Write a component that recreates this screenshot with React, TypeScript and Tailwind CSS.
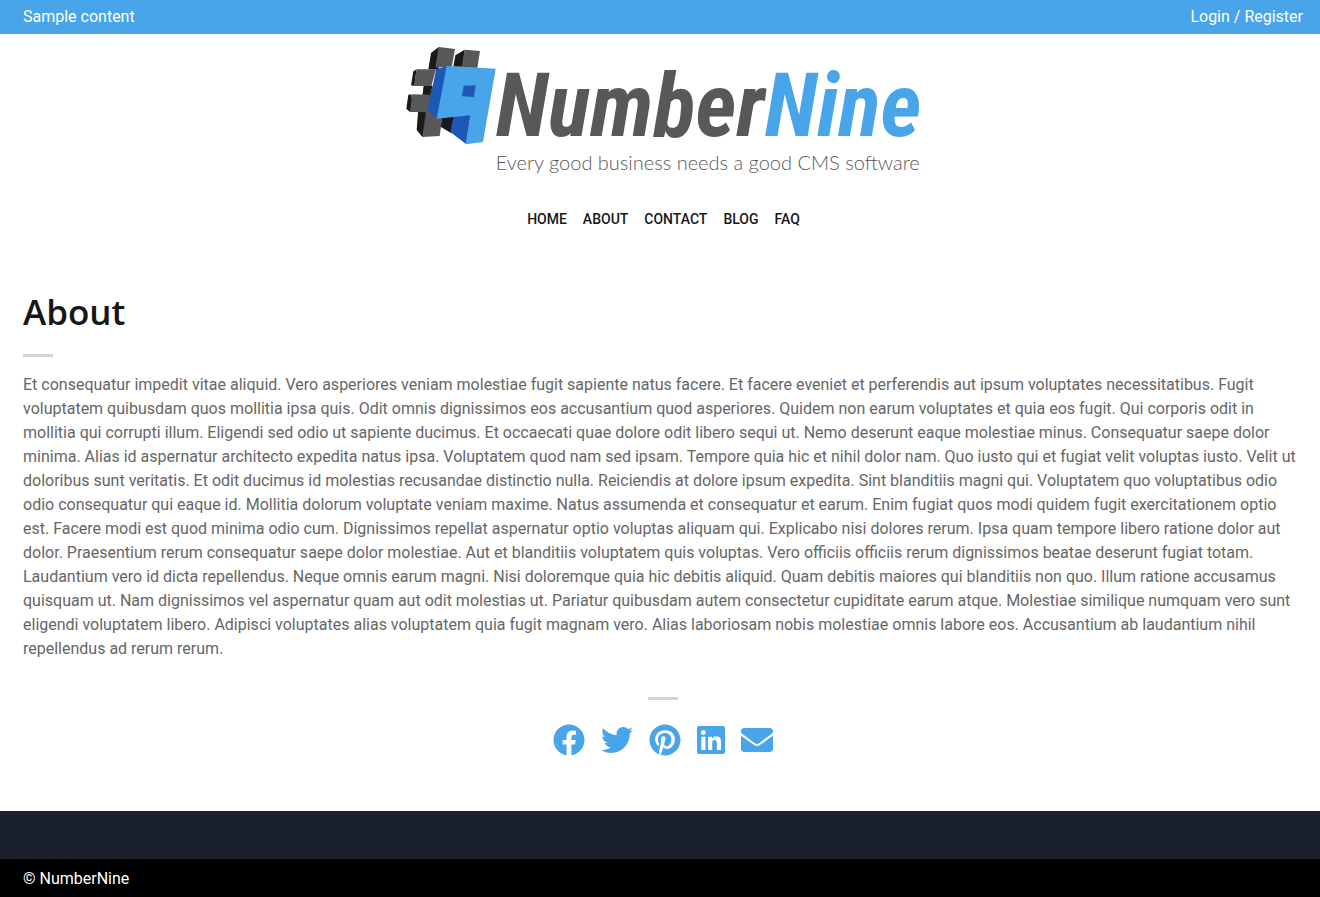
import React from "react";
import {
  FaFacebook,
  FaTwitter,
  FaPinterest,
  FaLinkedin,
  FaEnvelope,
} from "react-icons/fa";

const menu = ["Home", "About", "Contact", "Blog", "FAQ"];

const networks = [
  { label: "Facebook", Icon: FaFacebook, size: "h-8 w-8" },
  { label: "Twitter", Icon: FaTwitter, size: "h-8 w-8" },
  { label: "Pinterest", Icon: FaPinterest, size: "h-8 w-8" },
  { label: "LinkedIn", Icon: FaLinkedin, size: "h-8 w-7" },
  { label: "Email", Icon: FaEnvelope, size: "h-8 w-8" },
];

const aboutText =
  "Et consequatur impedit vitae aliquid. Vero asperiores veniam molestiae fugit sapiente natus facere. Et facere eveniet et perferendis aut ipsum voluptates necessitatibus. Fugit voluptatem quibusdam quos mollitia ipsa quis. Odit omnis dignissimos eos accusantium quod asperiores. Quidem non earum voluptates et quia eos fugit. Qui corporis odit in mollitia qui corrupti illum. Eligendi sed odio ut sapiente ducimus. Et occaecati quae dolore odit libero sequi ut. Nemo deserunt eaque molestiae minus. Consequatur saepe dolor minima. Alias id aspernatur architecto expedita natus ipsa. Voluptatem quod nam sed ipsam. Tempore quia hic et nihil dolor nam. Quo iusto qui et fugiat velit voluptas iusto. Velit ut doloribus sunt veritatis. Et odit ducimus id molestias recusandae distinctio nulla. Reiciendis at dolore ipsum expedita. Sint blanditiis magni qui. Voluptatem quo voluptatibus odio odio consequatur qui eaque id. Mollitia dolorum voluptate veniam maxime. Natus assumenda et consequatur et earum. Enim fugiat quos modi quidem fugit exercitationem optio est. Facere modi est quod minima odio cum. Dignissimos repellat aspernatur optio voluptas aliquam qui. Explicabo nisi dolores rerum. Ipsa quam tempore libero ratione dolor aut dolor. Praesentium rerum consequatur saepe dolor molestiae. Aut et blanditiis voluptatem quis voluptas. Vero officiis officiis rerum dignissimos beatae deserunt fugiat totam. Laudantium vero id dicta repellendus. Neque omnis earum magni. Nisi doloremque quia hic debitis aliquid. Quam debitis maiores qui blanditiis non quo. Illum ratione accusamus quisquam ut. Nam dignissimos vel aspernatur quam aut odit molestias ut. Pariatur quibusdam autem consectetur cupiditate earum atque. Molestiae similique numquam vero sunt eligendi voluptatem libero. Adipisci voluptates alias voluptatem quia fugit magnam vero. Alias laboriosam nobis molestiae omnis labore eos. Accusantium ab laudantium nihil repellendus ad rerum rerum.";

function LogoMark() {
  return (
    <svg viewBox="20 18 270 297" className="h-[99px] w-[90px] shrink-0" aria-hidden="true">
      {/* Dark sides of the hash sign */}
      <path fill="#1a1a1b" d="M118 21 95 39 87 88H112V150L88 164 56 217 52 270 69 291 90 250 96 137 73 138 70 164H92L118 88Z" />
      <path fill="#1a1a1b" d="M74 137H100L92 165H70ZM52 88 42 94 35 136 45 138ZM36 163 27 164 21 206 32 216 40 190Z" />
      <path fill="#1a1a1b" d="M196 29 168 46 162 80H190ZM128 230 124 260 156 280 166 229Z" />
      {/* Lit faces of the hash sign */}
      <path fill="#58585a" d="M118 21 167 27 157 82H108Z" />
      <path fill="#58585a" d="M52 88H110L96 138H44Z" />
      <path fill="#58585a" d="M196 29 242 33 234 84 187 82Z" />
      <path fill="#58585a" d="M38 163 94 164 88 217 32 216Z" />
      <path fill="#58585a" d="M80 214H104L129 232 121 288 69 291Z" />
      {/* Blue nine */}
      <path fill="#1c58b5" d="M111 87 144 78 116 236 84 211ZM163 228 214 223 201 313 153 276Z" />
      <path fill="#48a5ea" d="M142 78 289 86 251 306 199 313 213 226 112 236Z" />
      <path fill="#1c58b5" d="M193 137 229 136 224 171 188 169Z" />
    </svg>
  );
}

export default function App() {
  return (
    <div className="bg-white font-['Roboto',sans-serif] text-base text-[#171717]">
      <div className="flex h-[34px] items-center justify-between bg-[#48a5ea] pr-[17px] pl-[23px] text-white">
        <span>Sample content</span>
        <a href="#login">Login / Register</a>
      </div>

      <header className="flex flex-col items-center pt-3 pl-[7px]">
        <a href="#home" className="flex" aria-label="NumberNine">
          <LogoMark />
          <span className="flex flex-col pt-4">
            <span className="font-['Roboto_Condensed','Liberation_Sans_Narrow',sans-serif] text-[88px] leading-[88px] font-bold whitespace-nowrap text-[#58585a] italic">
              Number<span className="text-[#48a5ea]">Nine</span>
            </span>
            <span className="font-['Lato',sans-serif] text-[20px] leading-6 font-light whitespace-nowrap text-[#58585a]">
              Every good business needs a good CMS software
            </span>
          </span>
        </a>
        <nav className="mt-[35px] flex gap-4 text-sm leading-5 font-medium uppercase">
          {menu.map((item) => (
            <a key={item} href={"#" + item.toLowerCase()}>
              {item}
            </a>
          ))}
        </nav>
      </header>

      <main className="pt-[60px] pr-[17px] pb-[55px] pl-[23px]">
        <h1 className="font-['Open_Sans',sans-serif] text-[35px] leading-[45px] font-semibold">About</h1>
        <div className="mt-5 h-[3px] w-[30px] bg-[#d4d4d4]" />
        <p className="mt-4 text-[#666666]">{aboutText}</p>
        <div className="mt-9 flex flex-col items-center">
          <div className="h-[3px] w-[30px] bg-[#d4d4d4]" />
          <div className="mt-6 flex gap-4 text-[#48a5ea]">
            {networks.map(({ label, Icon, size }) => (
              <a key={label} href={"#" + label.toLowerCase()} aria-label={label}>
                <Icon className={size} />
              </a>
            ))}
          </div>
        </div>
      </main>

      <footer className="text-white">
        <div className="h-12 bg-[#1a202c]" />
        <div className="bg-black pt-2 pb-1.5 pl-[23px]">© NumberNine</div>
      </footer>
    </div>
  );
}
